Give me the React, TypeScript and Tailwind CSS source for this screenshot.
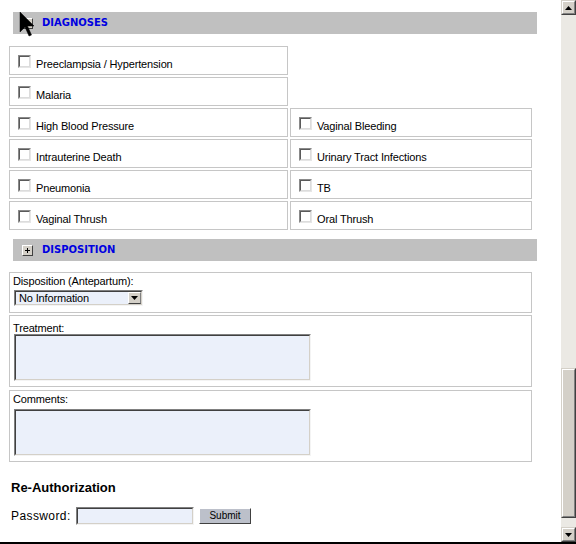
import React from "react";

const F = "font-['Liberation_Sans',Arial,sans-serif]";

function Checkbox() {
  return (
    <span className="block w-[13px] h-[13px] shrink-0 border border-t-[#8a8a8a] border-l-[#8a8a8a] border-b-[#e6e6e6] border-r-[#e6e6e6]">
      <span className="block w-full h-full border border-t-[#5a5a5a] border-l-[#5a5a5a] border-b-[#dcdcdc] border-r-[#dcdcdc] bg-white" />
    </span>
  );
}

function Cell({ label }: { label: string }) {
  return (
    <div className="h-[29px] border border-[#c6c6c6] flex items-start pl-[8px] pt-[8px]">
      <Checkbox />
      <span className="ml-[5px] mt-[3px] leading-[13px] text-[11px] tracking-[-0.15px] text-black whitespace-nowrap">
        {label}
      </span>
    </div>
  );
}

function ToggleIcon({ plus }: { plus: boolean }) {
  return (
    <span className="block w-[11px] h-[11px] shrink-0 border border-t-white border-l-white border-b-[#404040] border-r-[#404040] bg-[#d4d0c8]">
      <svg width="9" height="9" viewBox="0 0 9 9" className="block">
        <rect x="2" y="4" width="5" height="1" fill="#000" />
        {plus && <rect x="4" y="2" width="1" height="5" fill="#000" />}
      </svg>
    </span>
  );
}

function SectionBar({ title, plus }: { title: string; plus: boolean }) {
  return (
    <div className="ml-[4px] w-[524px] h-[22px] bg-[#c0c0c0] flex items-center">
      <span className="ml-[9px]">
        <ToggleIcon plus={plus} />
      </span>
      <span className="ml-[9px] font-['DejaVu_Sans',sans-serif] font-bold text-[10px] leading-[12px] text-[#0000e0]">
        {title}
      </span>
    </div>
  );
}

function Sunken({
  className,
  children,
}: {
  className: string;
  children?: React.ReactNode;
}) {
  return (
    <div
      className={
        "border border-t-[#808080] border-l-[#808080] border-b-[#f4f4f4] border-r-[#f4f4f4] " +
        className
      }
    >
      <div className="w-full h-full border border-t-[#404040] border-l-[#404040] border-b-[#d4d0c8] border-r-[#d4d0c8] bg-[#ebf0fa] relative">
        {children}
      </div>
    </div>
  );
}

function Arrow({ up }: { up: boolean }) {
  return (
    <svg width="7" height="4" viewBox="0 0 7 4" className="block">
      {up ? (
        <polygon points="3.5,0 7,4 0,4" fill="#000" />
      ) : (
        <polygon points="0,0 7,0 3.5,4" fill="#000" />
      )}
    </svg>
  );
}

function ScrollButton({ up }: { up: boolean }) {
  return (
    <div className="h-[15px] w-[15px] border border-t-[#d4d0c8] border-l-[#d4d0c8] border-b-[#404040] border-r-[#404040]">
      <div className="w-full h-full border border-t-white border-l-white border-b-[#808080] border-r-[#808080] bg-[#d4d0c8] flex items-center justify-center">
        <Arrow up={up} />
      </div>
    </div>
  );
}

export default function App() {
  const left = [
    "Preeclampsia / Hypertension",
    "Malaria",
    "High Blood Pressure",
    "Intrauterine Death",
    "Pneumonia",
    "Vaginal Thrush",
  ];
  const right: (string | null)[] = [
    null,
    null,
    "Vaginal Bleeding",
    "Urinary Tract Infections",
    "TB",
    "Oral Thrush",
  ];

  return (
    <div className={"relative w-[576px] h-[544px] bg-white border-b-2 border-black flex overflow-hidden text-black " + F}>
      <div className="w-[561px] h-[542px] pl-[9px] pt-[12px] flex flex-col">
        <SectionBar title="DIAGNOSES" plus={false} />

        <div className="mt-[12px] grid grid-cols-[279px_242px] gap-x-[2px] gap-y-[2px]">
          {left.map((l, i) => (
            <React.Fragment key={l}>
              <Cell label={l} />
              {right[i] ? <Cell label={right[i] as string} /> : <div />}
            </React.Fragment>
          ))}
        </div>

        <div className="mt-[9px]">
          <SectionBar title="DISPOSITION" plus={true} />
        </div>

        <div className="mt-[11px] w-[523px] flex flex-col gap-[2px]">
          <div className="border border-[#c6c6c6] pt-[2px] pb-[6px]">
            <div className="pl-[3px] h-[12px] leading-[12px] text-[11px] tracking-[-0.15px] whitespace-nowrap">
              Disposition (Antepartum):
            </div>
            <div className="ml-[4px] mt-[3px]">
              <Sunken className="w-[129px] h-[16px]">
                <span className="absolute left-[3px] top-0 leading-[12px] text-[11px] tracking-[-0.15px] whitespace-nowrap">
                  No Information
                </span>
                <span className="absolute right-0 top-0 w-[13px] h-[12px] border border-t-white border-l-white border-b-[#404040] border-r-[#808080] bg-[#d4d0c8] flex items-center justify-center">
                  <Arrow up={false} />
                </span>
              </Sunken>
            </div>
          </div>

          <div className="border border-[#c6c6c6] pt-[6px] pb-[5px]">
            <div className="pl-[3px] h-[12px] leading-[12px] text-[11px] tracking-[-0.15px]">
              Treatment:
            </div>
            <div className="ml-[4px]">
              <Sunken className="w-[297px] h-[47px]" />
            </div>
          </div>

          <div className="mt-[1px] border border-[#c6c6c6] pt-[2px] pb-[5px]">
            <div className="pl-[3px] h-[12px] leading-[12px] text-[11px] tracking-[-0.15px]">
              Comments:
            </div>
            <div className="ml-[4px] mt-[4px]">
              <Sunken className="w-[297px] h-[47px]" />
            </div>
          </div>
        </div>

        <div className="mt-[18px] ml-[2px] h-[16px] leading-[16px] text-[13px] font-bold whitespace-nowrap">
          Re-Authorization
        </div>

        <div className="mt-[11px] ml-[2px] h-[18px] flex items-center">
          <span className="w-[65px] text-[12px] tracking-[0.4px] leading-[14px] whitespace-nowrap">
            Password:
          </span>
          <Sunken className="w-[118px] h-[18px]" />
          <button className="ml-[5px] w-[52px] h-[16px] border border-t-white border-l-white border-b-[#404040] border-r-[#404040] bg-[#bcc0ca] flex items-center justify-center text-[10px] leading-[12px]">
            Submit
          </button>
        </div>
      </div>

      <div className="w-[15px] h-[542px] flex flex-col">
        <ScrollButton up={true} />
        <div className="h-[353px] bg-[#ebe9e4]" />
        <div className="h-[150px] border border-t-[#d4d0c8] border-l-[#d4d0c8] border-b-[#404040] border-r-[#404040]">
          <div className="w-full h-full border border-t-white border-l-white border-b-[#808080] border-r-[#808080] bg-[#d4d0c8]" />
        </div>
        <div className="flex-1 bg-[#ebe9e4]" />
        <ScrollButton up={false} />
      </div>

      <svg
        className="absolute left-[19px] top-[11px]"
        width="16"
        height="26"
        viewBox="0 0 16 26"
      >
        <polygon
          points="1,1 1,21 6,16 10,25 12.5,24 8.5,15 15,15"
          fill="#000"
          stroke="#000"
          strokeWidth="0.5"
        />
      </svg>
    </div>
  );
}
